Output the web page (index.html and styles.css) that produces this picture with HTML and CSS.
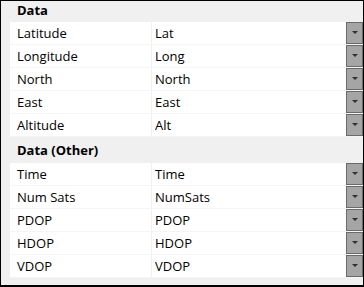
FILE: index.html
```html
<!DOCTYPE html>
<html lang="en">
<head>
    <meta charset="UTF-8">
    <title>Property Grid</title>
    <link rel="stylesheet" href="styles.css">
</head>
<body>
    <div class="grid">
        <div class="category first">Data</div>
        <div class="row"><div class="label">Latitude</div><div class="value">Lat</div><div class="drop"><span class="arrow"></span></div></div>
        <div class="row"><div class="label">Longitude</div><div class="value">Long</div><div class="drop"><span class="arrow"></span></div></div>
        <div class="row"><div class="label">North</div><div class="value">North</div><div class="drop"><span class="arrow"></span></div></div>
        <div class="row"><div class="label">East</div><div class="value">East</div><div class="drop"><span class="arrow"></span></div></div>
        <div class="row"><div class="label">Altitude</div><div class="value">Alt</div><div class="drop"><span class="arrow"></span></div></div>

        <div class="category">Data (Other)</div>
        <div class="row"><div class="label">Time</div><div class="value">Time</div><div class="drop"><span class="arrow"></span></div></div>
        <div class="row"><div class="label">Num Sats</div><div class="value">NumSats</div><div class="drop"><span class="arrow"></span></div></div>
        <div class="row"><div class="label">PDOP</div><div class="value">PDOP</div><div class="drop"><span class="arrow"></span></div></div>
        <div class="row"><div class="label">HDOP</div><div class="value">HDOP</div><div class="drop"><span class="arrow"></span></div></div>
        <div class="row"><div class="label">VDOP</div><div class="value">VDOP</div><div class="drop"><span class="arrow"></span></div></div>
    </div>
</body>
</html>
```

FILE: styles.css
```css
body {
    margin: 0;
    font-family: "Open Sans", "Noto Sans", sans-serif;
    font-size: 13px;
    color: #000;
}
.grid {
    width: 362px;
    height: 284px;
    border: 1px solid #000;
    border-bottom-width: 2px;
    background-color: #f0f0f0;
    overflow: hidden;
}
.category {
    height: 26px;
    line-height: 26px;
    padding-left: 16px;
    font-weight: bold;
}
.category.first {
    height: 21px;
    line-height: 19px;
}
.row {
    display: grid;
    grid-template-columns: 141px 1fr 17px;
    margin-left: 9px;
    height: 22px;
    background-color: #fff;
    border-bottom: 1px solid #f5f5f5;
}
.label {
    padding-left: 7px;
    line-height: 22px;
    white-space: nowrap;
}
.value {
    border-left: 1px solid #f0f0f0;
    padding-left: 3px;
    line-height: 22px;
    white-space: nowrap;
}
.drop {
    box-sizing: border-box;
    background-color: #a5a5a5;
    border: 1px solid #6a6a6a;
    display: flex;
    align-items: center;
    justify-content: center;
}
.arrow {
    width: 0;
    height: 0;
    border-left: 3px solid transparent;
    border-right: 3px solid transparent;
    border-top: 3px solid #303030;
    margin-top: -1px;
}
```
